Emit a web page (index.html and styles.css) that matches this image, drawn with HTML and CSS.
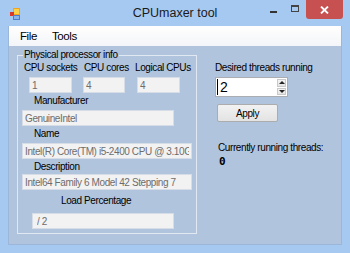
FILE: index.html
```html
<!DOCTYPE html>
<html lang="en">
<head>
    <meta charset="UTF-8">
    <meta name="viewport" content="width=device-width, initial-scale=1.0">
    <title>CPUmaxer tool</title>
    <link rel="stylesheet" href="styles.css">
</head>
<body>
    <div class="window">
        <div class="titlebar">
            <div class="title-left">
                <svg class="app-icon" width="11" height="12" viewBox="0 0 11 12">
                    <rect x="3" y="0" width="7" height="7" fill="#f2a51c"/>
                    <rect x="4" y="1" width="5" height="5" fill="#fbd24a"/>
                    <rect x="0" y="4" width="4" height="4" fill="#d8382c"/>
                    <rect x="3" y="7" width="7" height="5" fill="#4a7fd0"/>
                    <rect x="4" y="8" width="5" height="3" fill="#8db4ea"/>
                </svg>
            </div>
            <div class="title">CPUmaxer tool</div>
            <div class="controls">
                <div class="ctl ctl-min"><span class="dash"></span></div>
                <div class="ctl ctl-max"><span class="box"></span></div>
                <div class="ctl ctl-close">
                    <svg width="9" height="8" viewBox="0 0 9 8">
                        <path d="M1 0.5 L8 7.5 M8 0.5 L1 7.5" stroke="#fff" stroke-width="1.8"/>
                    </svg>
                </div>
            </div>
        </div>

        <div class="client">
            <div class="menubar">
                <span class="menu-item">File</span>
                <span class="menu-item">Tools</span>
            </div>

            <div class="main">
                <!-- Grupo de informações do processador -->
                <div class="group">
                    <span class="legend">Physical processor info</span>
                    <div class="cpu-row">
                        <div class="cpu-col col1">
                            <div class="label">CPU sockets</div>
                            <input class="field" type="text" value="1" readonly>
                        </div>
                        <div class="cpu-col col2">
                            <div class="label">CPU cores</div>
                            <input class="field" type="text" value="4" readonly>
                        </div>
                        <div class="cpu-col col3">
                            <div class="label">Logical CPUs</div>
                            <input class="field" type="text" value="4" readonly>
                        </div>
                    </div>

                    <div class="label sub-label">Manufacturer</div>
                    <input class="field field-manufacturer" type="text" value="GenuineIntel" readonly>

                    <div class="label sub-label">Name</div>
                    <input class="field field-wide" type="text" value="Intel(R) Core(TM) i5-2400 CPU @ 3.10GHz" readonly>

                    <div class="label sub-label">Description</div>
                    <input class="field field-wide field-desc" type="text" value="Intel64 Family 6 Model 42 Stepping 7" readonly>

                    <div class="label load-label">Load Percentage</div>
                    <input class="field field-load" type="text" value="/ 2" readonly>
                </div>

                <div class="side">
                    <div class="label">Desired threads running</div>
                    <div class="spin">
                        <input class="spin-input" type="text" value="2">
                        <div class="spin-buttons">
                            <div class="spin-btn"><span class="arrow-up"></span></div>
                            <div class="spin-btn"><span class="arrow-down"></span></div>
                        </div>
                    </div>
                    <button class="btn-apply">Apply</button>
                    <div class="label running-label">Currently running threads:</div>
                    <div class="running-count">0</div>
                </div>
            </div>
        </div>
    </div>
</body>
</html>
```

FILE: styles.css
```css
* {
    box-sizing: border-box;
}

body {
    margin: 0;
    padding: 0;
    font-family: "Liberation Sans", Arial, sans-serif;
    font-size: 10px;
    letter-spacing: -0.4px;
    color: #000;
}

.window {
    width: 350px;
    height: 253px;
    background: #a6c9f2;
    padding-bottom: 8px;
    display: flex;
    flex-direction: column;
}

/* Barra de título */
.titlebar {
    height: 26px;
    display: grid;
    grid-template-columns: 1fr auto 1fr;
}

.app-icon {
    display: block;
    margin: 8px 0 0 10px;
}

.title {
    font-size: 12.5px;
    letter-spacing: 0;
    line-height: 14px;
    padding-top: 6px;
    color: #1a1a1a;
}

.controls {
    display: flex;
    justify-content: flex-end;
    align-items: flex-start;
    padding-right: 7px;
}

.ctl {
    height: 19px;
    display: flex;
    justify-content: center;
}

.ctl-min {
    width: 22px;
}

.ctl-min .dash {
    width: 7px;
    height: 2px;
    margin-top: 11px;
    background: #333;
}

.ctl-max {
    width: 22px;
}

.ctl-max .box {
    width: 8px;
    height: 7px;
    margin-top: 5px;
    border: 1px solid #444;
    border-top-width: 2px;
}

.ctl-close {
    width: 37px;
    background: #c75150;
    align-items: center;
    border-radius: 0 0 3px 3px;
}

.ctl-close svg {
    display: block;
}

/* Área do cliente */
.client {
    flex: 1;
    margin: 0 8px;
    background: #b0c4de;
    border: 1px solid #9bb6d8;
    border-top: none;
    display: flex;
    flex-direction: column;
}

.menubar {
    height: 20px;
    background: linear-gradient(#ffffff, #f3f5f8);
    display: flex;
    align-items: center;
    gap: 15px;
    padding-left: 11px;
    font-size: 11.5px;
    letter-spacing: -0.4px;
}

.main {
    flex: 1;
    display: flex;
}

.label {
    line-height: 12px;
    white-space: nowrap;
}

/* Caixa de grupo */
.group {
    position: relative;
    width: 180px;
    height: 179px;
    margin: 9px 0 0 8px;
    border: 1px solid #e1e8f1;
    padding-top: 6px;
}

.legend {
    position: absolute;
    top: -7px;
    left: 5px;
    padding: 0 1px;
    line-height: 12px;
    background: #b0c4de;
}

.cpu-row {
    display: flex;
    padding-left: 6px;
}

.col1 {
    width: 59px;
}

.col2 {
    width: 52px;
}

.col2 .label {
    margin-left: 1px;
}

.field {
    display: block;
    height: 16px;
    padding: 0 2px;
    margin: 3px 0 0 0;
    border: 1px solid #d6dde6;
    background: #f2f2f2;
    color: #6d6d6d;
    font-family: inherit;
    font-size: 10px;
    letter-spacing: -0.4px;
    line-height: 14px;
    outline: none;
}

.col1 .field {
    width: 43px;
    margin-left: 5px;
}

.col2 .field {
    width: 42px;
}

.col3 .field {
    width: 43px;
    margin-left: 2px;
}

.sub-label {
    margin-top: 2px;
    padding-left: 16px;
}

.field-manufacturer {
    width: 152px;
    margin-left: 4px;
}

.field-wide {
    width: 170px;
    margin-left: 4px;
}

.field-desc {
    margin-top: 1px;
}

.load-label {
    margin-top: 5px;
    padding-left: 43px;
}

.field-load {
    width: 142px;
    margin: 6px 0 0 14px;
    padding-left: 4px;
}

/* Painel da direita */
.side {
    margin-left: 18px;
    padding-top: 16px;
}

.spin {
    width: 73px;
    height: 20px;
    margin-top: 3px;
    border: 1px solid #abadb3;
    background: #fff;
    display: flex;
}

.spin-input {
    width: 60px;
    border: none;
    padding: 0 0 0 2px;
    font-family: "Liberation Sans", Arial, sans-serif;
    font-size: 14px;
    letter-spacing: 0;
    line-height: 16px;
    outline: none;
    background: transparent;
    border-left: 1px solid #000;
    margin: 1px 0 1px 1px;
    height: 16px;
}

.spin-buttons {
    width: 11px;
    margin: 1px 1px 1px auto;
    display: flex;
    flex-direction: column;
    gap: 1px;
}

.spin-btn {
    flex: 1;
    background: linear-gradient(#f4f4f4, #e4e4e4);
    border: 1px solid #c9c9c9;
    display: flex;
    justify-content: center;
    align-items: center;
}

.arrow-up {
    border-left: 3px solid transparent;
    border-right: 3px solid transparent;
    border-bottom: 3px solid #222;
}

.arrow-down {
    border-left: 3px solid transparent;
    border-right: 3px solid transparent;
    border-top: 3px solid #222;
}

.btn-apply {
    display: block;
    width: 61px;
    height: 18px;
    margin: 7px 0 0 2px;
    padding: 0;
    border: 1px solid #acacac;
    border-radius: 2px;
    background: linear-gradient(#f2f2f2, #e3e3e3);
    font-family: inherit;
    font-size: 10px;
    letter-spacing: -0.4px;
    color: #000;
}

.running-label {
    margin: 20px 0 0 3px;
}

.running-count {
    margin: 1px 0 0 4px;
    font-family: "DejaVu Sans Mono", monospace;
    font-weight: bold;
    font-size: 11px;
    letter-spacing: 0;
    line-height: 13px;
}
```
